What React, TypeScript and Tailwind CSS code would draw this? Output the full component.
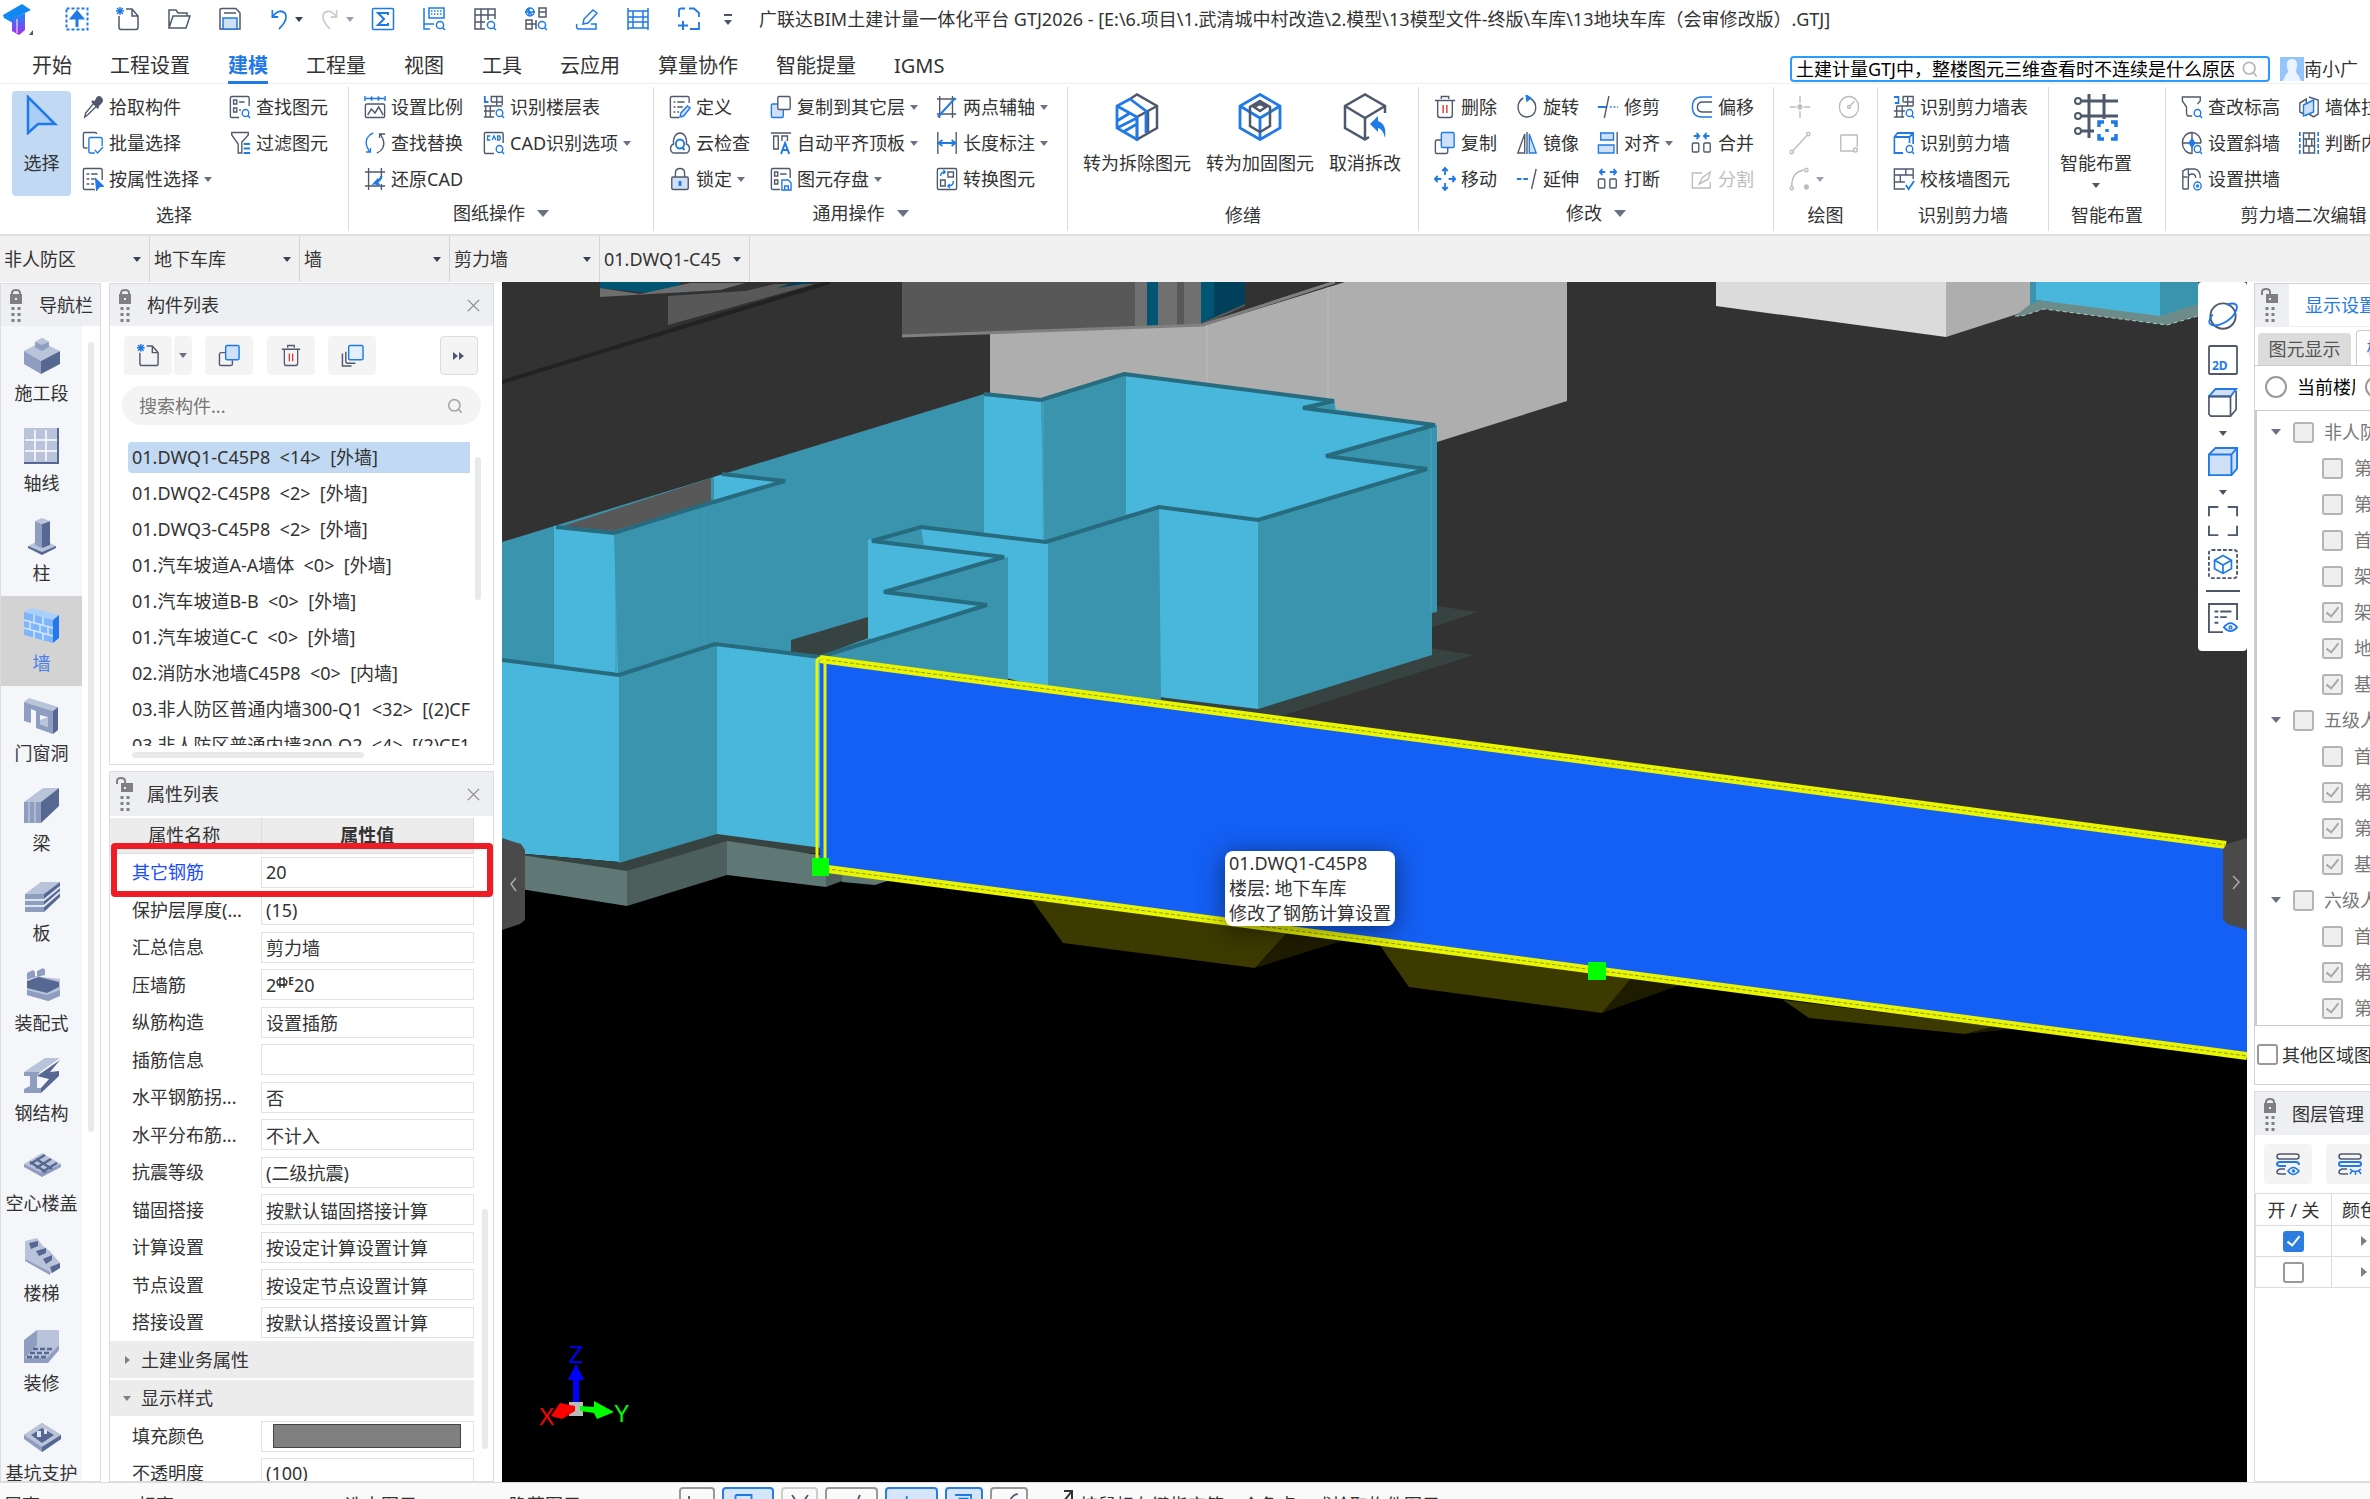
import { useState, type ReactNode } from 'react';
import clsx from 'clsx';

const G = '#4f596d';
const B = '#1f7ae8';
const F = '#cfe0f8';
const X = '#bdbdbd';

interface IconProps {
    children: ReactNode;
    className?: string;
    box?: string;
}

function Svg({ children, className = 'h-6 w-[22px]', box = '0 0 24 24' }: IconProps) {
    return (
        <svg viewBox={box} className={clsx('shrink-0', className)} fill="none" stroke={G} strokeWidth="1.5" preserveAspectRatio="none" aria-hidden="true">
            {children}
        </svg>
    );
}

const find = <g stroke={B}><circle cx="18" cy="18" r="3.6" /><path d="M20.5 20.5 23 23" /></g>;

const icons: Record<string, ReactNode> = {
    pick: <><path d="M3 22 4 18 13 8 16 11 6 20Z" /><path d="M11 6 18 13M14 8 17 3C19 1 23 4 21 7L17 11Z" fill={G} strokeWidth="2.500" /></>,
    batch: <><path d="M6 17H3Q1.500 17 1.500 15.500V3Q1.500 1.500 3 1.500H14Q16 1.500 16 3" /><path d="M14 22H9Q7.500 22 7.500 20.500V8Q7.500 6.500 9 6.500H20Q22 6.500 22 8V15M14 19 17 22 23 16" stroke={B} /></>,
    prop: <><path d="M14 22.500H3Q1.500 22.500 1.500 21V3Q1.500 1.500 3 1.500H20Q22 1.500 22 3V13M5 7H8M10 7H17M5 12H8M10 12H14M5 17H8M10 17H13" /><path d="M15 12 23 19 19 19.500 16 23Z" fill={B} stroke={B} /></>,
    findEl: <><path d="M11 22.500H3Q1.500 22.500 1.500 21V3Q1.500 1.500 3 1.500H20Q22 1.500 22 3V11M11 7H17M11 15H13" /><rect x="5" y="5" width="3.500" height="4" /><rect x="5" y="13" width="3.500" height="4" />{find}</>,
    filter: <><path d="M10 22V13L3 4V1.500H21V4L14 11V22Z" /><path d="M16 13H23M16 17.500H23M16 22H23" stroke={B} strokeWidth="2" /></>,
    scale: <><path d="M1 3.500H23M1 1V6M23 1V6M7 3.500 9 1.500M7 3.500 9 5.500M17 3.500 15 1.500M17 3.500 15 5.500" stroke={B} /><rect x="1.500" y="9" width="21" height="13.500" rx="1.500" /><path d="M4 20 8 14 12 18 16 12 21 20" /></>,
    replace: <><path d="M10 2C4 4 1 9 3 15L6 21M2 21H7V17" stroke={B} /><path d="M14 22C20 20 23 15 21 9L18 3M23 3H17V7" /></>,
    restore: <><path d="M5 1V19H23M1 5H19V12M19 17V23M1 19H5V23M19 1V5H23" /><path d="M19 9C18 13 16 15 12 16L16 12M12 16 17 18" stroke={B} strokeWidth="2.500" /></>,
    floorTable: <><path d="M9 7V1.500H21V10M9 7H21M15 1.500V10M1 11H21M8 11V22M1 16H13M1 22H12M3 11V22" /><path d="M2 1V7H6" stroke={B} strokeWidth="2" />{find}</>,
    cadOpt: <><path d="M12 22.500H3Q1.500 22.500 1.500 21V3Q1.500 1.500 3 1.500H20Q22 1.500 22 3V12" /><path d="M8 5H5V9H8M10 9 12 5 14 9M16 5V9H18L19 7 18 5Z" stroke={B} />{find}</>,
    define: <><path d="M11 22.500H3Q1.500 22.500 1.500 21V3Q1.500 1.500 3 1.500H20Q22 1.500 22 3V8M5 7H7M9 7H17M5 12H7M9 12H15M5 17H7M9 17H11" /><path d="M12 22 13 18 20 11 23 13 16 21Z" fill={F} stroke={B} /></>,
    cloud: <><path d="M6 22C1 22 0 15 5 13C4 6 8 2 12 2S20 6 19 13C24 15 23 22 18 22Z" /><circle cx="12" cy="13" r="4.500" stroke={B} strokeWidth="2" /><path d="M14 16 17 19" stroke={B} strokeWidth="2" /></>,
    lock: <><path d="M7 10V6Q7 1.500 12 1.500T17 6V10" /><rect x="3" y="10" width="18" height="12.500" rx="1.500" fill={F} /><path d="M12 14V19" stroke={B} strokeWidth="3" /></>,
    copyTo: <><rect x="1.500" y="9" width="13" height="13.500" rx="1.500" fill={F} stroke={B} /><rect x="8.500" y="1.500" width="13.500" height="13" rx="1.500" fill="#fff" /></>,
    alignTop: <><path d="M1 2H23M4 5H9V18H4ZM13 10V5H19V10" /><path d="M12 23 16.500 12 21 23M14 19H19" stroke={B} strokeWidth="2" /></>,
    store: <><path d="M11 22.500H3Q1.500 22.500 1.500 21V3Q1.500 1.500 3 1.500H20Q22 1.500 22 3V11M11 7H18" /><rect x="5" y="5" width="3.500" height="4" /><rect x="5" y="13" width="3.500" height="4" /><path d="M13 13H20L23 16V23H13ZM16 23V19H20V23" stroke={B} /></>,
    axis2: <><path d="M4 1V23M18 1V23M1 4H22M1 19H22" /><path d="M2 22 21 3" stroke={B} strokeWidth="2.200" /></>,
    dim: <><path d="M2 1V23M22 1V23" /><path d="M3 12H21M7 9 3 12 7 15M17 9 21 12 17 15" stroke={B} strokeWidth="2" /></>,
    convert: <><rect x="1.500" y="1.500" width="21" height="21" rx="1.500" /><rect x="13" y="5" width="6" height="5" /><rect x="5" y="13" width="5" height="6" /><path d="M5 9Q5 5 10 5M8 3 10 5 8 7M19 14Q19 19 13 19M15 17 13 19 15 21" stroke={B} /></>,
    del: <><path d="M8 4V1.500H16V4M1 5.500H23M4 6V20Q4 22.500 6.500 22.500H17.500Q20 22.500 20 20V6" /><path d="M10 10V18M14 10V18" stroke="#dc3030" /></>,
    copy: <><path d="M8 9H3Q1.500 9 1.500 11V21Q1.500 22.500 3 22.500H13Q15 22.500 15 21V17" /><rect x="8" y="1.500" width="14" height="15" rx="1.500" fill={F} stroke={B} /></>,
    move: <g stroke={B} strokeWidth="2"><path d="M12 1V8M12 16V23M1 12H8M16 12H23M9 4 12 1 15 4M9 20 12 23 15 20M4 9 1 12 4 15M20 9 23 12 20 15" /></g>,
    rotate: <><path d="M8 3C-1 8 1 22 12 22S25 8 15 3" /><path d="M11 0 16 3 12 6Z" fill={B} stroke={B} /></>,
    mirror: <><path d="M9.500 3V22H2Z" /><path d="M14.500 3V22H22Z" fill={F} stroke={B} /><path d="M12 1V23" /></>,
    extend: <><path d="M1 12H14" stroke={B} strokeWidth="2" strokeDasharray="5 2" /><path d="M22 2 17 22" /></>,
    trim: <><path d="M1 12H11" stroke={B} strokeWidth="2" /><path d="M14 12H23" stroke={B} strokeDasharray="2 2" /><path d="M13 1 8 23" /></>,
    align: <><rect x="4" y="2" width="14" height="7" fill={F} stroke={B} /><rect x="1.500" y="14" width="17" height="8" fill={F} stroke={B} /><path d="M22 1V23" /></>,
    break: <><rect x="1.500" y="12" width="7" height="9" rx="1" /><rect x="14" y="12" width="7" height="9" rx="1" /><path d="M9 5H3M6 2 3 5 6 8M14 5H21M18 2 21 5 18 8" stroke={B} strokeWidth="1.800" /></>,
    offset: <><path d="M23 7H13Q7 7 7 12T13 17H23" /><path d="M23 2H12Q1.500 2 1.500 12T12 22H23" stroke={B} /></>,
    merge: <><rect x="1.500" y="12" width="7" height="9" rx="1" /><rect x="14" y="12" width="7" height="9" rx="1" /><path d="M3 5H9M6 2 9 5 6 8M20 5H14M17 2 14 5 17 8" stroke={B} strokeWidth="1.800" /></>,
    split: <g stroke={X}><path d="M12 6H1.500V21H21V15" /><path d="M9 17 12 11 21 5 19 12Z" /></g>,
    point: <g stroke={X}><path d="M12 1V8M12 16V23M1 12H8M16 12H23" /><circle cx="12" cy="12" r="2" fill={X} /></g>,
    circle: <g stroke={X}><circle cx="12" cy="12" r="10.500" /><circle cx="12" cy="12" r="1.500" /><path d="M13 11 18 6" /></g>,
    line: <g stroke={X}><circle cx="3" cy="21" r="1.800" /><circle cx="21" cy="3" r="1.800" /><path d="M4 20 20 4" /></g>,
    rect: <g stroke={X}><path d="M3 4H21V16M17 20H3V4" /><circle cx="19" cy="19" r="2" /></g>,
    arc: <g stroke={X}><path d="M3 19Q3 5 16 3" /><circle cx="3" cy="21" r="1.800" /><circle cx="19" cy="3" r="1.800" /><circle cx="19" cy="20" r="2" fill={X} /></g>,
    wallTable: <><path d="M11 7V1.500H22V11M11 7H22M16 1.500V11M4 11H22M10 11V22M1 16H13M1 22H12M4 11V22" /><path d="M1 2H6V8H2" stroke={B} strokeWidth="1.800" />{find}</>,
    wall: <><path d="M11 22H1.500V6L5 2H22V13M1.500 6H18L22 2M18 6V12" stroke={B} strokeWidth="1.800" />{find}</>,
    check: <><path d="M22 12V2H1.500V22H13M1.500 8H22M1.500 15H13M14 2V8M8 8V15" /><path d="M14 18 17 22 23 14" stroke={B} strokeWidth="2" /></>,
    height: <><path d="M12 21H8Q6 21 6 17V12L1.500 6V2H21V6L18 9" />{find}</>,
    slant: <><path d="M12 1.500A10.500 10.500 0 1 0 12 22.500M12 1.500A10.500 10.500 0 0 1 22 12M12 1V23M1 12H22" /><path d="M9 12 12 8 15 12 12 16Z" fill={B} stroke={B} />{find}</>,
    arch: <><path d="M2 22V4L6 2H15Q21 3 21 11M8 22V11Q8 7 12 7T16 11M2 22H8M2 10H7M8 2V8" /><circle cx="18" cy="19" r="4" stroke={B} /><circle cx="18" cy="19" r="1" stroke={B} /></>,
    wallJoin: <><path d="M2 8 9 4V20L2 17ZM12 2 22 5V19L17 22 12 19" /><path d="M6 10 17 5V17L6 21Z" fill={F} stroke={B} /></>,
    judge: <><path d="M2 1V23M22 1V23" stroke={B} strokeDasharray="4 2" strokeWidth="1.800" /><rect x="6" y="2" width="12" height="20" /><path d="M12 2V8M6 8H18M6 15H18M12 15V22M9 8V15M15 8V15" /></>,
};

const titleIcons: ReactNode[] = [
    <><rect x="1.500" y="1.500" width="21" height="21" stroke={B} strokeWidth="2" strokeDasharray="3 2" /><path d="M12 20V7M7 11 12 5 17 11Z" fill={B} stroke={B} strokeWidth="3" /></>,
    <><path d="M3 9V20Q3 22.500 5 22.500H20Q22 22.500 22 20V9L16 2H10M16 2V9H22" /><path d="M1 1 7 7M7 1 1 7M4 0V8M0 4H8" stroke={B} /></>,
    <path d="M2 21V3H9L11 6H20V9M2 21 6 9H23L19 21Z" />,
    <><path d="M2 22V3Q2 1.500 4 1.500H18L22 6V22ZM6 6H18" /><rect x="5" y="11" width="14" height="11" fill={F} stroke={B} /></>,
];

const titleTools: ReactNode[] = [
    <><rect x="1.500" y="1.500" width="21" height="21" rx="1" stroke={B} /><path d="M17 8V6H7L13 12 7 18H17V16" stroke={B} strokeWidth="2" /></>,
    <><path d="M2 1V22H8M2 17H12M7 1H22V11H7Z" stroke={B} /><path d="M9 4H20M9 7H20" stroke={B} strokeDasharray="1.500 1.500" />{find}</>,
    <><path d="M12 22H2V2H22V12M2 8H22M2 15H12M8 2V22M15 2V13" />{find}</>,
    <><path d="M15 1H22V10H15ZM15 5H22M2 13H8V22H2ZM2 17H12M12 13V22" /><path d="M5 1V9M1 5H11M3 2 8 8" stroke={B} /><circle cx="6" cy="5" r="4" stroke={B} />{find}</>,
    <path d="M8 17 9 12 18 3 22 6 13 16ZM2 17Q0 22 5 22H21V17H16" stroke={B} />,
    <path d="M2 1V23M22 1V23M2 4H22M2 10H22M2 15H22M2 21H22M7 4V21M17 4V21" stroke={B} />,
    <><path d="M2 10V3Q2 1.500 4 1.500H8M12 1.500H17L22 6V10M22 15V22H13" stroke={B} strokeWidth="1.800" /><path d="M6 14V23M1 18.500H11" stroke={B} strokeWidth="2" /></>,
];

function Caret({ className = 'border-t-gray-500' }: { className?: string }) {
    return <span className={clsx('inline-block h-0 w-0 shrink-0 border-x-4 border-t-[5px] border-x-transparent', className)} />;
}

interface ToolProps {
    icon: string;
    label?: string;
    menu?: boolean;
    disabled?: boolean;
}

function Tool({ icon, label, menu, disabled }: ToolProps) {
    return (
        <button type="button" disabled={disabled} aria-label={label ?? icon} className={clsx('flex h-9 items-center gap-[5px] whitespace-nowrap', disabled && 'text-[#bdbdbd]')}>
            <Svg>{icons[icon]}</Svg>
            {label}
            {menu && <Caret className={disabled ? 'border-t-gray-400' : undefined} />}
        </button>
    );
}

function Column({ items, className }: { items: ToolProps[]; className?: string }) {
    return (
        <div className={clsx('flex shrink-0 flex-col items-start', className)}>
            {items.map((item) => <Tool key={item.icon} {...item} />)}
        </div>
    );
}

function Group({ title, menu, className, children }: { title: string; menu?: boolean; className: string; children: ReactNode }) {
    return (
        <section className={clsx('flex shrink-0 flex-col border-r border-[#dcdcdc] pt-0.5', className)}>
            <div className="flex h-27 pl-[15px]">{children}</div>
            <div className={clsx('flex h-8 items-center justify-center gap-3', !menu && 'pt-1')}>
                {title}
                {menu && <span className="inline-block h-0 w-0 border-x-[6px] border-t-[7px] border-x-transparent border-t-gray-500" />}
            </div>
        </section>
    );
}

function BigTool({ label, children }: { label: string; children: ReactNode }) {
    return (
        <button type="button" className="flex h-27 flex-col items-center gap-2.5 whitespace-nowrap pt-1">
            <Svg className="h-12 w-11" box="0 0 44 48">{children}</Svg>
            <span className="leading-6">{label}</span>
        </button>
    );
}

const tabs = ['开始', '工程设置', '建模', '工程量', '视图', '工具', '云应用', '算量协作', '智能提量', 'IGMS'];

function TitleBar() {
    return (
        <header>
            <div className="flex h-[38px] items-center">
                <svg viewBox="0 0 36 34" className="h-[34px] w-9 shrink-0" aria-hidden="true">
                    <defs>
                        <linearGradient id="logo" x1="0" y1="0" x2="0" y2="1"><stop offset="0" stopColor="#168cf5" /><stop offset="1" stopColor="#a52cf0" /></linearGradient>
                    </defs>
                    <path d="M3 13 22 2 31 8 13 17V21L4 16Z" fill="#1187f3" />
                    <path d="M12 17 25 11V28L19 33 12 29Z" fill="url(#logo)" />
                    <path d="M17 17V31" stroke="#fff" />
                    <path d="M29 33H33V28Z" fill="#555" />
                </svg>
                <div className="ml-[29px] flex items-center gap-[27px]">
                    {titleIcons.map((icon, i) => (
                        <button key={i} type="button" aria-label={['上传', '新建', '打开', '保存'][i]}><Svg className="size-6">{icon}</Svg></button>
                    ))}
                    <button type="button" aria-label="撤销" className="flex w-6 items-center">
                        <Svg className="h-6 w-5"><path d="M4 3V10H11M4 10Q12 1 19 6Q24 12 12 22" stroke={B} strokeWidth="2" /></Svg>
                        <Caret className="ml-1.5 border-t-gray-700" />
                    </button>
                    <button type="button" aria-label="重做" className="flex w-6 items-center">
                        <Svg className="h-6 w-5"><path d="M20 3V10H13M20 10Q12 1 5 6Q0 12 12 22" stroke="#ccc" strokeWidth="2" /></Svg>
                        <Caret className="ml-1.5 border-t-gray-400" />
                    </button>
                    {titleTools.map((icon, i) => (
                        <button key={i} type="button" aria-label={['汇总', '查看', '表格', '识别', '编辑', '轴网', '区域'][i]}><Svg className="size-6">{icon}</Svg></button>
                    ))}
                    <button type="button" aria-label="更多" className="-ml-1 flex flex-col items-center gap-1">
                        <span className="h-0.5 w-2 bg-gray-600" />
                        <Caret className="border-t-gray-600" />
                    </button>
                </div>
                <h1 className="ml-[27px] whitespace-nowrap">广联达BIM土建计量一体化平台 GTJ2026 - [E:\6.项目\1.武清城中村改造\2.模型\13模型文件-终版\车库\13地块车库（会审修改版）.GTJ]</h1>
            </div>
            <div className="flex h-[46px] border-b border-[#eee] pl-8">
                <nav className="flex gap-[38px] text-[20px]">
                    {tabs.map((tab) => (
                        <button key={tab} type="button" className={clsx('h-[46px] whitespace-nowrap border-b-[3px] pt-3', tab === '建模' ? 'border-[#1f7ae8] font-bold text-[#1f7ae8]' : 'border-transparent')}>
                            {tab}
                        </button>
                    ))}
                </nav>
                <label className="mt-[18px] ml-auto flex h-[26px] w-[480px] shrink-0 items-center rounded border-2 border-[#2b9cff] px-1 text-black">
                    <input aria-label="搜索" defaultValue="土建计量GTJ中，整楼图元三维查看时不连续是什么原因" className="min-w-0 flex-1 outline-none" />
                    <Svg className="mr-1 ml-1.5 size-5"><circle cx="11" cy="11" r="7" stroke="#b5b5b5" strokeWidth="2" /><path d="M16 16 20 21" stroke="#b5b5b5" strokeWidth="2" /></Svg>
                </label>
                <button type="button" className="mt-[18px] mr-3 ml-2.5 flex h-[25px] shrink-0 items-center">
                    <Svg className="size-6"><path d="M0 0H24V24H0Z" fill="#93c5fb" stroke="none" /><path d="M12 2C6 2 6 9 8 13C9 16 5 17 3 24H21C19 17 15 16 16 13C18 9 18 2 12 2Z" fill="#fff" stroke="none" opacity=".8" /></Svg>
                    南小广
                </button>
            </div>
        </header>
    );
}

function Ribbon() {
    return (
        <div className="flex h-[150px] overflow-hidden py-[3px]">
            <Group title="选择" className="w-[349px]">
                <button type="button" className="-ml-[3px] mt-0.5 mr-[11px] flex h-[105px] w-[59px] shrink-0 flex-col items-center justify-start gap-4 rounded bg-[#c1d9f2] pt-1">
                    <Svg className="h-10 w-8" box="0 0 32 40"><path d="M2 2V38L12 29H29Z" fill="#a9cdf7" stroke={B} strokeWidth="2.500" /></Svg>
                    <span className="leading-6">选择</span>
                </button>
                <Column className="w-[147px]" items={[{ icon: 'pick', label: '拾取构件' }, { icon: 'batch', label: '批量选择' }, { icon: 'prop', label: '按属性选择', menu: true }]} />
                <Column items={[{ icon: 'findEl', label: '查找图元' }, { icon: 'filter', label: '过滤图元' }]} />
            </Group>
            <Group title="图纸操作" menu className="w-[305px]">
                <Column className="w-[119px]" items={[{ icon: 'scale', label: '设置比例' }, { icon: 'replace', label: '查找替换' }, { icon: 'restore', label: '还原CAD' }]} />
                <Column items={[{ icon: 'floorTable', label: '识别楼层表' }, { icon: 'cadOpt', label: 'CAD识别选项', menu: true }]} />
            </Group>
            <Group title="通用操作" menu className="w-[414px]">
                <Column className="w-[101px]" items={[{ icon: 'define', label: '定义' }, { icon: 'cloud', label: '云检查' }, { icon: 'lock', label: '锁定', menu: true }]} />
                <Column className="w-[166px]" items={[{ icon: 'copyTo', label: '复制到其它层', menu: true }, { icon: 'alignTop', label: '自动平齐顶板', menu: true }, { icon: 'store', label: '图元存盘', menu: true }]} />
                <Column items={[{ icon: 'axis2', label: '两点辅轴', menu: true }, { icon: 'dim', label: '长度标注', menu: true }, { icon: 'convert', label: '转换图元' }]} />
            </Group>
            <Group title="修缮" className="w-[351px]">
                <div className="flex gap-[15px]">
                    <BigTool label="转为拆除图元">
                        <path d="M15 6 22 1.500 42 13V35L22 46.500V24L42 13M33 18V40" strokeWidth="2.500" />
                        <path d="M15 6 2 13V35L22 46.500V24L2 13M15 6 31 18V40M2 28 15 20M2 35 22 25M8 39 22 31" stroke={B} strokeWidth="2.800" />
                    </BigTool>
                    <BigTool label="转为加固图元">
                        <path d="M22 1.500 42 13V35L22 46.500 2 35V13ZM2 13 22 25 42 13M22 25V46" stroke={B} strokeWidth="2.800" />
                        <path d="M22 8 32 14V33L22 39 12 33V14ZM16 14 22 18 28 14 22 11Z" strokeWidth="2.500" />
                    </BigTool>
                    <BigTool label="取消拆改">
                        <path d="M42 20V13L22 1.500 2 13V35L22 46.500 26 44M2 13 22 25 42 13M22 25V46" strokeWidth="2.500" />
                        <path d="M27 31 35 23V28Q44 31 42 45Q40 36 35 35V39Z" fill={B} stroke="none" />
                    </BigTool>
                </div>
            </Group>
            <Group title="修改" menu className="w-[355px]">
                <Column className="w-[82px]" items={[{ icon: 'del', label: '删除' }, { icon: 'copy', label: '复制' }, { icon: 'move', label: '移动' }]} />
                <Column className="w-[81px]" items={[{ icon: 'rotate', label: '旋转' }, { icon: 'mirror', label: '镜像' }, { icon: 'extend', label: '延伸' }]} />
                <Column className="w-[94px]" items={[{ icon: 'trim', label: '修剪' }, { icon: 'align', label: '对齐', menu: true }, { icon: 'break', label: '打断' }]} />
                <Column items={[{ icon: 'offset', label: '偏移' }, { icon: 'merge', label: '合并' }, { icon: 'split', label: '分割', disabled: true }]} />
            </Group>
            <Group title="绘图" className="w-[104px]">
                <Column className="w-[49px]" items={[{ icon: 'point', disabled: true }, { icon: 'line', disabled: true }, { icon: 'arc', menu: true, disabled: true }]} />
                <Column items={[{ icon: 'circle', disabled: true }, { icon: 'rect', disabled: true }]} />
            </Group>
            <Group title="识别剪力墙" className="w-[171px]">
                <Column items={[{ icon: 'wallTable', label: '识别剪力墙表' }, { icon: 'wall', label: '识别剪力墙' }, { icon: 'check', label: '校核墙图元' }]} />
            </Group>
            <Group title="智能布置" className="w-[117px]">
                <button type="button" className="-ml-1 flex h-27 flex-col items-center pt-1">
                    <Svg className="mb-2.5 h-12 w-11" box="0 0 44 48">
                        <path d="M15 1V45M30 1V26M6 8H44M6 23H44M6 38H20" strokeWidth="3" />
                        <circle cx="4" cy="8" r="3" strokeWidth="2" /><circle cx="4" cy="23" r="3" strokeWidth="2" /><circle cx="4" cy="38" r="3" strokeWidth="2" />
                        <path d="M25 34V29H30M37 29H42V34M42 41V46H37M30 46H25V41M33 36V39" stroke={B} strokeWidth="3.500" />
                    </Svg>
                    <span className="leading-6">智能布置</span>
                    <Caret className="mt-2 border-t-gray-600" />
                </button>
            </Group>
            <Group title="剪力墙二次编辑" className="w-[276px]">
                <Column className="w-[117px]" items={[{ icon: 'height', label: '查改标高' }, { icon: 'slant', label: '设置斜墙' }, { icon: 'arch', label: '设置拱墙' }]} />
                <Column items={[{ icon: 'wallJoin', label: '墙体拉伸' }, { icon: 'judge', label: '判断内外墙' }]} />
            </Group>
        </div>
    );
}

function FilterBar() {
    const values = ['非人防区', '地下车库', '墙', '剪力墙', '01.DWQ1-C45'];
    return (
        <div className="flex h-12 border-t-2 border-[#e0e0e0] bg-[#f0f0f0]">
            {values.map((value) => (
                <label key={value} className="relative flex w-[150px] items-center border-r border-[#d4d4d4]">
                    <select aria-label={value} className="w-full appearance-none bg-transparent pl-1 outline-none">
                        <option>{value}</option>
                    </select>
                    <Caret className="pointer-events-none absolute right-2 border-t-gray-700" />
                </label>
            ))}
        </div>
    );
}

function PanelGrip({ open }: { open?: boolean }) {
    return (
        <Svg className="h-[34px] w-[18px]" box="0 0 18 34">
            <path d={open ? 'M1 7V4Q1 1 5 1T9 4V7' : 'M5 7V5Q5 2 9 2T13 5V7'} stroke="#808080" strokeWidth="2" />
            <path d={open ? 'M5 6H17V15H5Z' : 'M3 6H15V16H3Z'} fill="#808080" stroke="none" />
            <path d="M8 10H10V12H8Z" fill="#eee" stroke="none" />
            <path d="M6 19V34M12 19V34" stroke="#808080" strokeWidth="3" strokeDasharray="3 3" />
        </Svg>
    );
}

const L1 = '#b9c3da';
const L2 = '#8f9dc0';
const L3 = '#566791';

const navItems: { label: string; art: ReactNode }[] = [
    { label: '施工段', art: <><path d="M1 14 18 5 37 14 18 24Z" fill={L1} /><path d="M1 14 18 24V37L1 27Z" fill={L2} /><path d="M37 14 18 24V37L37 27Z" fill={L3} /><path d="M12 5 19 1 26 5V10L19 14 12 10Z" fill={L2} /><path d="M12 5 19 1 26 5 19 8Z" fill={L1} /></> },
    { label: '轴线', art: <><path d="M1 1H36V37H1Z" fill={L2} /><path d="M1 1H34V35H1Z" fill={L1} /><path d="M12 3V34M23 3V34M2 13H34M2 24H34" stroke="#fff" strokeWidth="1.500" /><path d="M35 1V36H1" stroke={L3} strokeWidth="2" fill="none" /></> },
    { label: '柱', art: <><path d="M5 29 19 22 33 29 19 37Z" fill={L1} /><path d="M5 29 19 35 33 29V31L19 38 5 31Z" fill={L3} /><path d="M12 4 19 7V31L12 28Z" fill={L2} /><path d="M27 4 19 7V31L27 28Z" fill={L3} /><path d="M12 4 19 1 27 4 19 7Z" fill={L1} /></> },
    { label: '墙', art: <><path d="M1 5 8 1 36 8 30 13Z" fill="#a9cffd" /><path d="M30 13 36 8V31L30 36Z" fill="#2478ef" /><path d="M1 5 30 13V36L1 28Z" fill="#7fb6fb" /><path d="M1 13 30 21M1 21 30 29M11 8V15M20 10V18M7 15V22M17 18V25M25 20V27M11 24V31M20 26V33" stroke="#d4e6fd" strokeWidth="1.500" /></> },
    { label: '门窗洞', art: <><path d="M1 5 6 1 35 10 30 14Z" fill={L1} /><path d="M30 14 35 10V33L30 37Z" fill={L3} /><path d="M1 5 30 14V37L13 31V14L8 12V26L1 24ZM17 18V27L25 30V20Z" fill={L2} fillRule="evenodd" /><path d="M17 23 25 20V30L17 27Z" fill={L1} /></> },
    { label: '梁', art: <><path d="M1 15 20 1H36L18 15Z" fill={L1} /><path d="M1 15H18V36H1Z" fill={L2} /><path d="M18 15 36 1V19L18 36Z" fill={L3} /><path d="M6 15V36M12 15V36" stroke={L1} strokeWidth="1.500" /></> },
    { label: '板', art: <><path d="M2 17 18 5H37L21 17Z" fill={L1} /><path d="M2 17H21V35H2Z" fill={L2} /><path d="M21 17 37 5V20L21 35Z" fill={L3} /><path d="M2 23H21L37 10M2 29H21L37 15" stroke="#dfe4ef" strokeWidth="2" fill="none" /></> },
    { label: '装配式', art: <><path d="M4 16 12 9 37 12V28L26 34 4 28Z" fill={L1} /><path d="M4 14 16 10 36 15V20L24 26 4 21Z" fill={L3} /><path d="M4 23 24 28 37 23V29L25 34 4 28Z" fill={L2} /><path d="M4 6 10 3 12 5V10L4 13ZM14 4 20 1 22 3V8L14 10Z" fill={L2} /></> },
    { label: '钢结构', art: <><path d="M1 15 22 1H37L17 15Z" fill={L1} /><path d="M1 15H17L14 19V31H18V36H1V32L7 29V19H1Z" fill={L2} /><path d="M14 19 37 3 27 15 36 14V19L18 36V31L26 22Z" fill={L3} /></> },
    { label: '空心楼盖', art: <><path d="M1 17 19 6 38 17 19 28Z" fill={L1} /><path d="M1 17 19 26 38 17V20L19 30 1 20Z" fill={L2} /><path d="M7 17 22 8M13 21 28 12M19 25 34 16M7 15 23 25M13 12 29 22" stroke={L3} strokeWidth="2.500" /></> },
    { label: '楼梯', art: <><path d="M2 4 14 1 20 9 27 14 37 26V31L27 37 2 22Z" fill={L1} /><path d="M6 6 15 4V9L8 12ZM13 14 23 11V16L16 19ZM20 22 29 18V23L23 27ZM27 30 37 26V31L29 36Z" fill={L3} /><path d="M2 22 27 35V38L2 24Z" fill={L2} /></> },
    { label: '装修', art: <><path d="M1 13 14 3V22L1 32Z" fill={L2} /><path d="M14 3H36V22H14Z" fill={L1} /><path d="M1 32 14 18H36L24 35H1Z" fill={L1} /><path d="M1 31H24L36 18V23L25 36H1Z" fill={L2} /><path d="M10 22H30M7 26H27M4 30H23" stroke={L3} strokeWidth="2.500" strokeDasharray="5 2" /></> },
    { label: '基坑支护', art: <><path d="M1 18 19 6 38 18V22L19 35 1 22Z" fill={L2} /><path d="M1 18 19 6 38 18 19 30Z" fill={L1} /><path d="M8 18 19 11 31 18 19 26Z" fill={L3} /><path d="M14 14H18V20H14ZM21 12H24V17H21Z" fill="#dfe4ef" /><path d="M38 18V22L19 35V30Z" fill={L3} /></> },
];

function NavPanel() {
    return (
        <aside className="mt-px flex w-[101px] shrink-0 flex-col overflow-hidden border border-[#dcdcdc]">
            <h2 className="flex h-[42px] shrink-0 items-center gap-[14px] overflow-hidden whitespace-nowrap bg-[#eeeff2] pl-[6px]">
                <PanelGrip />
                导航栏
            </h2>
            <div className="flex min-h-0 flex-1 overflow-hidden">
                <ul className="w-[81px] bg-[#f4f6f9]">
                    {navItems.map(({ label, art }) => (
                        <li key={label}>
                            <button type="button" className={clsx('flex h-[90px] w-[81px] flex-col items-center gap-1.5 whitespace-nowrap pt-[11px]', label === '墙' && 'bg-[#d3d3d3] text-[#4a7fe8]')}>
                                <Svg className="size-[38px]" box="0 0 38 38"><g stroke="none">{art}</g></Svg>
                                <span className="leading-6">{label}</span>
                            </button>
                        </li>
                    ))}
                </ul>
                <div className="mt-4 ml-1.5 h-[790px] w-1.5 rounded bg-[#e9e9e9]" />
            </div>
        </aside>
    );
}

const components = [
    '01.DWQ1-C45P8  <14>  [外墙]',
    '01.DWQ2-C45P8  <2>  [外墙]',
    '01.DWQ3-C45P8  <2>  [外墙]',
    '01.汽车坡道A-A墙体  <0>  [外墙]',
    '01.汽车坡道B-B  <0>  [外墙]',
    '01.汽车坡道C-C  <0>  [外墙]',
    '02.消防水池墙C45P8  <0>  [内墙]',
    '03.非人防区普通内墙300-Q1  <32>  [(2)CF20]',
    '03.非人防区普通内墙300-Q2  <4>  [(2)CF18]',
];

function PanelHeader({ title, open, className }: { title: string; open?: boolean; className: string }) {
    return (
        <div className={clsx('flex shrink-0 items-center bg-[#eeeff2] pr-[13px] pl-[6px]', className)}>
            <PanelGrip open={open} />
            <h2 className="ml-[13px] flex-1">{title}</h2>
            <button type="button" aria-label="关闭"><Svg className="size-[13px]" box="0 0 15 15"><path d="M1 1 14 14M14 1 1 14" stroke="#8a8a8a" /></Svg></button>
        </div>
    );
}

function ComponentPanel() {
    const [selected, setSelected] = useState(0);

    return (
        <section className="flex h-[482px] shrink-0 flex-col border border-[#dcdcdc]">
            <PanelHeader title="构件列表" className="h-[42px]" />
            <div className="mt-2.5 flex h-[39px] shrink-0 pr-[15px] pl-[14px] [&>button]:flex [&>button]:items-center [&>button]:justify-center [&>button]:rounded [&>button]:bg-[#f4f4f4]">
                <button type="button" aria-label="新建" className="w-12"><Svg className="size-[23px]">{titleIcons[1]}</Svg></button>
                <button type="button" aria-label="新建选项" className="ml-0.5 w-[18px]"><Caret /></button>
                <button type="button" aria-label="复制" className="ml-[13px] w-12"><Svg className="size-[23px]">{icons.copy}</Svg></button>
                <button type="button" aria-label="删除" className="ml-[14px] w-12"><Svg className="h-[23px] w-5">{icons.del}</Svg></button>
                <button type="button" aria-label="层间复制" className="ml-[13px] w-12"><Svg className="size-[23px]"><path d="M5 8V18Q5 20 7 20H15M1.500 10V23H11" /><rect x="8" y="1.500" width="15" height="15" rx="1.500" fill="#e4effd" stroke={B} /></Svg></button>
                <button type="button" aria-label="更多" className="ml-auto w-[38px] border border-[#dcdcdc]"><Svg className="h-2 w-3" box="0 0 12 8"><path d="M0 0 5 4 0 8ZM6 0 11 4 6 8Z" fill={G} stroke="none" /></Svg></button>
            </div>
            <label className="mx-[12px] mt-[11px] flex h-[39px] shrink-0 items-center rounded-full bg-[#f4f4f4] pr-[18px] pl-[17px]">
                <input aria-label="搜索构件" placeholder="搜索构件..." className="min-w-0 flex-1 bg-transparent outline-none placeholder:text-[#777]" />
                <Svg className="size-4"><circle cx="11" cy="11" r="8.500" stroke="#aaa" strokeWidth="2.500" /><path d="M17 17 22 22" stroke="#aaa" strokeWidth="2.500" /></Svg>
            </label>
            <div className="mt-[14px] flex h-[307px] shrink-0 pl-[18px]">
                <ul className="w-[342px] overflow-hidden">
                    {components.map((name, i) => (
                        <li key={name} className="flex h-9 items-center">
                            <button type="button" onClick={() => setSelected(i)} className={clsx('h-[31px] w-[342px] shrink-0 overflow-hidden whitespace-pre pl-1 text-left', i === selected && 'rounded-l bg-[#c1d9f2]')}>
                                {name}
                            </button>
                        </li>
                    ))}
                </ul>
                <div className="mt-[18px] ml-[5px] h-[143px] w-1.5 rounded bg-[#e9e9e9]" />
            </div>
            <div className="mt-1.5 ml-[22px] h-1.5 w-[232px] shrink-0 rounded bg-[#e9e9e9]" />
        </section>
    );
}

const properties = [
    ['其它钢筋', '20'],
    ['保护层厚度(...', '(15)'],
    ['汇总信息', '剪力墙'],
    ['压墙筋', ''],
    ['纵筋构造', '设置插筋'],
    ['插筋信息', ''],
    ['水平钢筋拐...', '否'],
    ['水平分布筋...', '不计入'],
    ['抗震等级', '(二级抗震)'],
    ['锚固搭接', '按默认锚固搭接计算'],
    ['计算设置', '按设定计算设置计算'],
    ['节点设置', '按设定节点设置计算'],
    ['搭接设置', '按默认搭接设置计算'],
    ['土建业务属性'],
    ['显示样式'],
    ['填充颜色', ''],
    ['不透明度', '(100)'],
];

const valueBox = 'flex h-[31px] w-full items-center border border-[#e2e2e2] bg-white pl-1 outline-none';

function PropertyValue({ name, value }: { name: string; value: string }) {
    if (name === '压墙筋') {
        return (
            <button type="button" aria-label={name} className={valueBox}>
                2
                <Svg className="mb-1 h-3 w-3" box="0 0 12 12"><ellipse cx="6" cy="5" rx="5" ry="3" stroke="#333" /><path d="M4 0V11M8 0V11M1 8H11" stroke="#333" /></Svg>
                <span className="mb-2 text-[10px] font-bold">E</span>
                20
            </button>
        );
    }
    if (name === '填充颜色') {
        return (
            <button type="button" aria-label={name} className={clsx(valueBox, 'pr-3 pl-[11px]')}>
                <span className="h-6 flex-1 border border-[#444] bg-[#808080]" />
            </button>
        );
    }
    return <input aria-label={name} defaultValue={value} className={valueBox} />;
}

function PropertyPanel() {
    return (
        <section className="relative mt-[6px] flex min-h-0 flex-1 flex-col border border-[#dcdcdc]">
            <PanelHeader title="属性列表" open className="h-11" />
            <div className="mt-0.5 flex min-h-0 flex-1 overflow-hidden">
                <table className="h-0 w-[364px] table-fixed border-collapse">
                    <thead>
                        <tr className="h-[35px] border-b border-[#dcdcdc] bg-[#ececec]">
                            <th className="w-[151px] border-r border-[#dcdcdc] pr-[2px] font-normal">属性名称</th>
                            <th className="border-r border-[#dcdcdc] font-bold">属性值</th>
                        </tr>
                    </thead>
                    <tbody>
                        {properties.map(([name, value], i) => value === undefined ? (
                            <tr key={name} className="h-[38px]">
                                <td colSpan={2} className="border-b-2 border-white bg-[#ececec] p-0">
                                    <button type="button" className="flex items-center gap-2.5 pl-[13px]">
                                        <Svg className="size-2" box="0 0 8 8"><path d={i === 13 ? 'M2 0 7 4 2 8Z' : 'M0 2 4 7 8 2Z'} fill="#808080" stroke="none" /></Svg>
                                        {name}
                                    </button>
                                </td>
                            </tr>
                        ) : (
                            <tr key={name} className={i % 2 ? 'h-[37px]' : 'h-[38px]'}>
                                <td className={clsx('p-0 pl-[22px] whitespace-nowrap', i === 0 && 'text-[#1a4cff]')}>{name}</td>
                                <td className="p-0"><PropertyValue name={name} value={value} /></td>
                            </tr>
                        ))}
                    </tbody>
                </table>
                <div className="mt-[391px] ml-2 h-[240px] w-1.5 shrink-0 rounded bg-[#e9e9e9]" />
            </div>
            {/* highlight around the first property row */}
            <div className="pointer-events-none absolute top-[71px] right-0 left-px h-[54px] rounded-sm border-[6px] border-[#ee1c24]" />
        </section>
    );
}

const TL = '#49b7dc';
const TD = '#3a94ae';
const TE = '#276b7f';

function Scene() {
    return (
        <svg viewBox="502 282 1745 1200" preserveAspectRatio="xMinYMin slice" className="absolute inset-0 h-full w-full" aria-hidden="true">
            <path d="M502 282H2247V880L820 700H502Z" fill="#323232" />
            {/* far structures */}
            <path d="M600 282H680V293L640 292 600 288Z" fill="#005573" />
            <path d="M600 288 640 294 690 283H745L720 290 600 297Z" fill="#6e6e6e" />
            <path d="M668 296 745 291 775 284H815L668 325Z" fill="#585858" />
            <path d="M777 288 795 282H815Z" fill="#00405a" />
            <path d="M502 382 646 338 830 282" stroke="#222" strokeWidth="4" fill="none" />
            <path d="M902 282H1245V306L1201 326 990 334 902 336Z" fill="#585858" />
            <path d="M1135 282H1201V326L1135 327Z" fill="#707070" />
            <path d="M1147 282H1158V326H1147Z" fill="#005573" />
            <path d="M1177 282H1184V326H1177Z" fill="#585858" />
            <path d="M1201 282H1245V304L1201 323Z" fill="#00405a" />
            <path d="M1201 282H1214V316L1201 323Z" fill="#005573" />
            <path d="M1245 282H1325L1245 307Z" fill="#323232" />
            <path d="M990 333 1206 325 1345 282H1567V401L1437 442 1200 460 990 400Z" fill="#aeaeae" />
            <path d="M902 336 983 333 1203 325 1335 282" stroke="#808080" strokeWidth="3" fill="none" />
            <path d="M1207 325V390M1328 287V400" stroke="#bcbcbc" fill="none" />
            <path d="M1716 282H1946V337L1716 306Z" fill="#dbdbdb" />
            <path d="M1946 282H2030V310L1946 337Z" fill="#aeaeae" />
            <path d="M2015 316 2036 300 2160 314 2198 300V316L2167 325 2044 309 2022 316Z" fill="#6d8c89" />
            <path d="M2015 316H2022L2044 309 2167 325 2198 316" stroke="#a5ccc9" strokeDasharray="4 3" fill="none" />
            <path d="M2030 282H2038V300L2030 306Z" fill={TD} />
            <path d="M2036 282H2160V316L2036 300Z" fill={TL} />
            <path d="M2160 282H2198V304L2160 316Z" fill={TD} />

            {/* shadows on slab */}
            <path d="M1430 605 1478 612 1430 628ZM1430 648 1474 655 1275 718 1150 700Z" fill="#364341" />

            {/* rear long wall */}
            <path d="M502 542 984 394V680H502Z" fill={TD} />
            <path d="M563 526 711 478V502L613 531Z" fill="#585858" />
            <path d="M714 477 724 474 784 481 714 502Z" fill={TL} />
            <path d="M554 526 614 532 618 675 554 664Z" fill={TL} />
            <path d="M704 508V645" stroke="#3f9cb5" fill="none" />
            <path d="M556 527 614 533 700 506 785 481 722 474" stroke={TE} strokeWidth="4" fill="none" />
            <path d="M616 534V672" stroke={TD} />

            {/* tower */}
            <path d="M984 394 1041 400 1048 545 984 545Z" fill={TL} />
            <path d="M1041 400 1126 375V540H1044Z" fill={TD} />
            <path d="M1126 375 1334 401 1336 409 1437 425 1424 469 1258 520 1159 507 1126 515Z" fill={TL} />
            <path d="M1303 408 1334 401 1336 413Z" fill={TD} />
            <path d="M1326 456 1437 425V612L1432 613V655L1258 709V520L1427 469Z" fill={TD} />
            <path d="M1159 507 1258 520V709L1159 697Z" fill={TL} />
            <path d="M1048 542 1159 507 1161 700 1048 690Z" fill={TD} />
            <path d="M868 540 921 527 1048 542V690L868 638Z" fill={TL} />
            <path d="M874 541 921 527 924 546Z" fill={TD} />
            <path d="M1008 557 884 592 987 605 815 658 1008 700Z" fill={TD} />
            <path d="M791 640 868 617V638L820 656 791 652Z" fill="#364341" />
            <path d="M984 394 1041 400 1124 374 1334 401 1303 408 1435 425 1326 456 1427 469 1258 520 1159 507 1046 542 921 527 872 541 1004 557 884 592 987 605 820 657" stroke={TE} strokeWidth="4" fill="none" />
            <path d="M1043 402V540M1431 428V610" stroke="#4aa5bf" fill="none" />

            {/* front wall and footing */}
            <path d="M502 660 619 675V862L502 852Z" fill={TL} />
            <path d="M502 852 619 862 717 832 842 848 842 856 727 846 627 876 502 862Z" fill="#364341" />
            <path d="M619 675 717 644V834L619 863Z" fill={TD} />
            <path d="M717 644 822 656V848L717 834Z" fill={TL} />
            <path d="M502 660 619 675 715 644 820 657" stroke={TE} strokeWidth="4" fill="none" />
            <path d="M502 852 627 871V906L502 886Z" fill="#5f7876" />
            <path d="M627 871 727 841V875L627 906Z" fill="#4c5f5d" />
            <path d="M727 841 826 856V887L727 875Z" fill="#5f7876" />
            <path d="M826 856 842 849V881L826 887Z" fill="#4c5f5d" />
            <path d="M842 872 890 880 875 885 842 882Z" fill="#5f7876" />

            {/* column caps under the slab */}
            <path d="M1032 900 1063 943 1255 968 1290 930Z" fill="#3c3a00" />
            <path d="M1255 968 1287 933 1345 940Z" fill="#1e1c00" />
            <path d="M1379 944 1409 987 1602 1013 1636 978Z" fill="#3c3a00" />
            <path d="M1602 1013 1632 977 1680 985Z" fill="#1e1c00" />
            <path d="M1783 1000 1809 1018 1965 1034 1998 1027Z" fill="#3c3a00" />
            <path d="M1965 1034 1998 1025 2012 1029Z" fill="#1e1c00" />

            {/* selected wall */}
            <path d="M820 658 2226 845H2247V1057L820 867Z" fill="#145ff4" />
            <path d="M820 659 2226 845M820 868 2247 1056" stroke="#eaf500" strokeWidth="8" fill="none" />
            <path d="M820 659 2226 845M820 868 2247 1056" stroke="#8a9a20" strokeDasharray="4 2" fill="none" />
            <path d="M817 867V660Q820 656 825 659V867" stroke="#eaf500" strokeWidth="3" fill="none" />
            <path d="M812 858H829V876H812ZM1588 962H1606V980H1588Z" fill="#0f0" />

            {/* side handles */}
            <path d="M502 838 521 844 525 850V920L520 924 502 930Z" fill="#4a4a4a" />
            <path d="M516 878 511 884 516 891" stroke="#aaa" strokeWidth="1.500" fill="none" />
            <path d="M2247 838 2227 844 2223 849V919L2227 924 2247 930Z" fill="#4a4a4a" />
            <path d="M2233 876 2239 882 2233 889" stroke="#aaa" strokeWidth="1.500" fill="none" />

            {/* axes */}
            <path d="M573 1404V1380H568L576 1364 584 1380H579V1404Z" fill="#00f" />
            <path d="M569 1402H583V1416H569Z" fill="#bbb" />
            <path d="M575 1406 560 1403 551 1416 562 1419 575 1411Z" fill="red" />
            <path d="M580 1406 594 1407V1401L614 1412 597 1419 594 1413 580 1411Z" fill="#0f0" />
            <g fontFamily="'Liberation Sans', sans-serif" fontSize="23">
                <text x="569" y="1363" fill="#00f">Z</text>
                <text x="539" y="1425" fill="red">X</text>
                <text x="614" y="1422" fill="#0f0">Y</text>
            </g>
        </svg>
    );
}

function Viewport() {
    return (
        <main className="relative min-w-0 flex-1 overflow-hidden bg-black">
            <Scene />
            <div role="tooltip" className="absolute top-[569px] left-[723px] rounded-lg bg-white px-1 leading-[25px] whitespace-nowrap shadow-[0_4px_24px_rgba(0,0,0,0.5)]">
                <p>01.DWQ1-C45P8</p>
                <p>楼层: 地下车库</p>
                <p>修改了钢筋计算设置</p>
            </div>
            <div className="absolute top-0 right-0 flex h-[369px] w-[49px] flex-col items-center rounded-sm bg-white pt-5">
                <button type="button" aria-label="动态观察"><Svg className="size-[30px]" box="0 0 32 32"><circle cx="16" cy="15" r="13.500" strokeWidth="2" /><path d="M20 3C28 0 33 2 30 9C26 20 8 29 2 23Q0 20 5 13" stroke={B} strokeWidth="2" /></Svg></button>
                <button type="button" aria-label="二维" className="mt-[13px]">
                    <Svg className="size-[30px]" box="0 0 30 30"><rect x="1" y="1" width="28" height="28" rx="1" strokeWidth="1.800" /><text x="4" y="25" fontSize="12" fontWeight="bold" fontFamily="'Noto Sans', sans-serif" fill={B} stroke="none">2D</text></Svg>
                </button>
                <button type="button" aria-label="俯视" className="mt-[13px]"><Svg className="size-[30px]" box="0 0 32 32"><path d="M1 9 8 1H30L24 9Z" fill={F} stroke={B} strokeWidth="2" /><path d="M1 9H24V30H3L1 28ZM24 30 30 23V3" strokeWidth="1.800" /></Svg></button>
                <Caret className="mt-[13px] border-t-gray-600" />
                <button type="button" aria-label="实体显示" className="mt-[11px]"><Svg className="size-[30px]" box="0 0 32 32"><path d="M1 8 8 1H31V23L25 30H1Z" fill={F} stroke={B} strokeWidth="2" /><path d="M1 8H25V30M25 8 31 1" stroke={B} strokeWidth="2" /></Svg></button>
                <Caret className="mt-[13px] border-t-gray-600" />
                <button type="button" aria-label="全屏" className="mt-[11px]"><Svg className="size-[30px]" box="0 0 32 32"><path d="M1 11V1H11M21 1H31V11M31 21V31H21M11 31H1V21" strokeWidth="2" /></Svg></button>
                <button type="button" aria-label="局部三维" className="mt-[13px]"><Svg className="size-[30px]" box="0 0 32 32"><rect x="1" y="1" width="30" height="30" rx="3" strokeWidth="2" strokeDasharray="4 2" /><path d="M16 7 25 12V21L16 26 7 21V12ZM7 12 16 17 25 12M16 17V26" stroke={B} strokeWidth="1.800" /></Svg></button>
                <div className="mt-[11px] h-0.5 w-[34px] bg-gray-600" />
                <button type="button" aria-label="显示设置" className="mt-[11px]"><Svg className="size-[30px]" box="0 0 32 32"><path d="M16 31H1V1H31V18M7 9H11M13 9H25M7 15H11M13 15H20M7 21H11" strokeWidth="2" /><path d="M17 26Q24 17 31 26Q24 34 17 26Z" stroke={B} strokeWidth="2" /><circle cx="24" cy="26" r="1.500" stroke={B} /></Svg></button>
            </div>
        </main>
    );
}

const checkMark = "before:h-3 before:w-[14px] before:content-[''] before:[clip-path:polygon(12%_48%,2%_62%,42%_98%,98%_16%,88%_4%,40%_74%)]";

function Check({ label, checked, disabled }: { label: string; checked?: boolean; disabled?: boolean }) {
    return (
        <input
            type="checkbox"
            aria-label={label}
            defaultChecked={checked}
            disabled={disabled}
            className={clsx(
                'flex size-[21px] shrink-0 appearance-none items-center justify-center rounded-[3px] border-2',
                checkMark,
                disabled ? 'border-[#b4b4b4] bg-[#efefef] checked:before:bg-[#a8a8a8]' : 'border-[#999] bg-white checked:border-[#2b7de0] checked:bg-[#2b7de0] checked:before:bg-white',
            )}
        />
    );
}

const tree: { label: string; group?: boolean; checked?: boolean }[] = [
    { label: '非人防区', group: true },
    { label: '第5层' },
    { label: '第2层' },
    { label: '首层' },
    { label: '架空层' },
    { label: '架空夹层', checked: true },
    { label: '地下车库', checked: true },
    { label: '基础层', checked: true },
    { label: '五级人防', group: true },
    { label: '首层' },
    { label: '第-1层', checked: true },
    { label: '第-2层', checked: true },
    { label: '基础层', checked: true },
    { label: '六级人防', group: true },
    { label: '首层' },
    { label: '第-1层', checked: true },
    { label: '第-2层', checked: true },
];

function RightPanels() {
    return (
        <aside className="mt-px ml-[7px] flex w-[116px] shrink-0 flex-col overflow-hidden whitespace-nowrap">
            <section className="h-[802px] shrink-0 border border-r-0 border-[#cfd3d8]">
                <div className="flex h-[43px] items-center border-b border-[#eeeff2]">
                    <div className="flex h-full w-[34px] shrink-0 items-center bg-[#eeeff2] pl-1.5"><PanelGrip open /></div>
                    <h2 className="pl-4 text-[#1f7ae8]">显示设置</h2>
                </div>
                <div className="flex h-[39px] items-end border-b border-[#c8ccd2] pl-[3px]">
                    <button type="button" className="h-8 w-[93px] shrink-0 rounded-t bg-[#dcdcdc] text-[#555]">图元显示</button>
                    <button type="button" className="ml-[5px] h-[35px] w-[93px] shrink-0 rounded-t border border-b-0 border-[#c8ccd2] text-[#1f7ae8]">楼层显示</button>
                </div>
                <div className="flex h-[45px] items-center border-b border-[#c8ccd2] pb-0.5 pl-2.5 text-black">
                    <label className="flex items-center">
                        <input type="radio" name="floor" className="size-[22px] shrink-0 appearance-none rounded-full border-2 border-[#999]" />
                        <span className="ml-2.5 w-[58px] overflow-hidden">当前楼层</span>
                    </label>
                    <label className="ml-2.5 flex items-center">
                        <input type="radio" name="floor" className="size-[22px] shrink-0 appearance-none rounded-full border-2 border-[#999]" />
                        全部楼层
                    </label>
                </div>
                <ul className="h-[615px] overflow-hidden border-b border-l-2 border-[#c8ccd2] pt-[3px] text-[#777]">
                    {tree.map(({ label, group, checked }, i) => (
                        <li key={i} className={clsx('flex h-9 items-center', group ? 'gap-2.5 pl-[14px]' : 'gap-[11px] pl-[65px]')}>
                            {group && <span className="mr-0.5 h-0 w-0 shrink-0 border-x-[5px] border-t-[6px] border-x-transparent border-t-gray-500" />}
                            <Check label={label} checked={checked} disabled />
                            {label}
                        </li>
                    ))}
                </ul>
                <label className="flex h-[57px] items-center gap-1 pl-0.5">
                    <Check label="其他区域图元" />
                    其他区域图元
                </label>
            </section>
            <section className="mt-[6px] min-h-0 flex-1 border border-r-0 border-[#dcdcdc]">
                <h2 className="flex h-[43px] items-center gap-[13px] bg-[#eeeff2] pl-[6px]"><PanelGrip />图层管理</h2>
                <div className="flex gap-[14px] py-[9px] pl-[9px]">
                    <button type="button" aria-label="显示图层" className="flex h-10 w-12 shrink-0 items-center justify-center rounded bg-[#f4f4f4]">
                        <Svg className="size-6"><rect x="1" y="2" width="22" height="5" rx="2.500" /><path d="M10 14H4Q1 14 1 12T4 10H20Q23 10 23 13" stroke={B} strokeWidth="2" /><path d="M10 22H4Q1 22 1 20T4 17H9" /><path d="M12 19Q17 12 23 19Q17 26 12 19Z" stroke={B} /><circle cx="17.500" cy="19" r="1" stroke={B} /></Svg>
                    </button>
                    <button type="button" aria-label="隐藏图层" className="flex h-10 w-12 shrink-0 items-center justify-center rounded bg-[#f4f4f4]">
                        <Svg className="size-6"><rect x="1" y="2" width="22" height="5" rx="2.500" /><rect x="1" y="10" width="22" height="4" rx="2" stroke={B} strokeWidth="2" /><path d="M10 22H4Q1 22 1 20T4 17H9" /><path d="M12 17Q17 22 23 17M14 19 12 22M17.500 20V23M21 19 23 22" stroke={B} /></Svg>
                    </button>
                </div>
                <table className="w-[180px] table-fixed border-collapse [&_td]:border [&_td]:border-[#dcdcdc] [&_th]:border [&_th]:border-[#dcdcdc]">
                    <thead>
                        <tr className="h-8"><th className="w-[76px] font-normal">开 / 关</th><th className="pl-2.5 text-left font-normal">颜色</th></tr>
                    </thead>
                    <tbody>
                        {[true, false].map((on) => (
                            <tr key={String(on)} className="h-[31px]">
                                <td className="p-0"><div className="flex justify-center"><Check label="图层开关" checked={on} /></div></td>
                                <td className="p-0 pl-[29px]"><Svg className="h-2.5 w-1.5" box="0 0 6 10"><path d="M0 0 6 5 0 10Z" fill="#808080" stroke="none" /></Svg></td>
                            </tr>
                        ))}
                    </tbody>
                </table>
            </section>
        </aside>
    );
}

const toggles = [
    { name: '正交', size: 'w-9', art: 'M9 6V20H28' },
    { name: '对象捕捉', size: 'w-[52px]', on: true, art: 'M4 5H22V20M4 5V12H14' },
    { name: '交点', size: 'w-[37px]', dim: true, art: 'M9 5 18 18 27 5' },
    { name: '垂点', size: 'w-[53px]', art: 'M27 5 20 20' },
    { name: '中点', size: 'w-[53px]', on: true, art: 'M12 6V20H28' },
    { name: '顶点', size: 'w-[38px]', on: true, art: 'M8 5H26V20M12 9H22V20' },
    { name: '坐标', size: 'w-[38px]', art: 'M28 4Q20 4 16 20M10 16H20' },
];

function StatusBar() {
    return (
        <footer className="flex h-[17px] shrink-0 items-start overflow-hidden border-t border-[#ddd] bg-[#fafafa] whitespace-nowrap">
            <p className="flex w-[679px] shrink-0 pt-2.5 leading-6">
                <span className="w-[134px] pl-1">层高: &nbsp;3.95</span>
                <span className="w-[211px] pl-1">标高: &nbsp;-11.45~-7.5</span>
                <span className="w-[164px]">选中图元: 1(1)</span>
                <span>隐藏图元: 0</span>
            </p>
            <div className="mt-1 flex gap-[7px]">
                {toggles.map(({ name, size, on, dim, art }) => (
                    <button key={name} type="button" aria-label={name} className={clsx('h-8 shrink-0 rounded border-2', size, on ? 'border-[#2b7de0] bg-[#d5e5fb]' : dim ? 'border-[#ccc]' : 'border-[#999]')}>
                        <svg viewBox="0 0 36 28" className="mx-auto h-7 w-8" fill="none" stroke={on ? B : G} strokeWidth="2" aria-hidden="true"><path d={art} /></svg>
                    </button>
                ))}
            </div>
            <svg viewBox="0 0 14 20" className="mt-1.5 ml-[34px] h-5 w-3.5 shrink-0" fill="none" stroke="#333" strokeWidth="2" aria-hidden="true"><path d="M2 2H10V10M10 2 2 12" /></svg>
            <p className="ml-1 pt-2.5 leading-6">按鼠标左键指定第一个角点，或拾取构件图元</p>
        </footer>
    );
}

export default function App() {
    return (
        <div className="flex h-screen flex-col overflow-hidden bg-white font-['Noto_Sans','Noto_Sans_CJK_SC',sans-serif] text-[18px] leading-6 text-[#333]">
            <TitleBar />
            <Ribbon />
            <FilterBar />
            <div className="flex min-h-0 flex-1 gap-2">
                <NavPanel />
                <div className="mt-px flex w-[385px] shrink-0 flex-col">
                    <ComponentPanel />
                    <PropertyPanel />
                </div>
                <div className="flex min-w-0 flex-1">
                    <Viewport />
                    <RightPanels />
                </div>
            </div>
            <StatusBar />
        </div>
    );
}
